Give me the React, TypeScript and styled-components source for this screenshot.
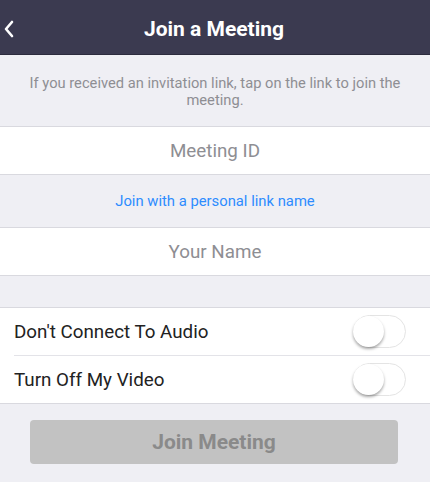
import React, { useState } from 'react';
import styled, { createGlobalStyle } from 'styled-components';

const GlobalStyle = createGlobalStyle`
  html, body {
    margin: 0;
    padding: 0;
    background: #efeff4;
    font-family: Roboto, "Noto Sans", "Liberation Sans", sans-serif;
  }
`;

const Screen = styled.div`
  display: flex;
  flex-direction: column;
  width: 430px;
  min-height: 482px;
  background: #efeff4;
`;

const Header = styled.header`
  align-items: center;
  background: #3b3a50;
  border-bottom: 1px solid #2c2b3d;
  display: flex;
  height: 54px;
  justify-content: center;
  position: relative;
`;

const BackButton = styled.button`
  align-items: center;
  background: none;
  border: none;
  display: flex;
  left: 2px;
  padding: 0;
  position: absolute;
  top: 20px;
`;

const Title = styled.h1`
  color: #ffffff;
  font-size: 21px;
  font-weight: 700;
  margin: 0 0 0 -2px;
  padding-top: 3px;
`;

const Info = styled.p`
  color: #8e8e93;
  font-size: 14.7px;
  line-height: 17px;
  margin: 0;
  padding: 20px 20px 17px;
  text-align: center;
  border-bottom: 1px solid #d9d9df;
`;

const InputRow = styled.input`
  background: #ffffff;
  border: none;
  border-bottom: 1px solid #d9d9df;
  box-sizing: border-box;
  color: #333333;
  font-family: inherit;
  font-size: 18.8px;
  height: 48px;
  padding: 0 16px;
  text-align: center;
  width: 100%;

  &::placeholder {
    color: #8e8e93;
  }

  &:focus {
    outline: none;
  }
`;

const LinkRow = styled.div`
  align-items: center;
  border-bottom: 1px solid #d9d9df;
  display: flex;
  height: 52px;
  justify-content: center;
`;

const Link = styled.a`
  color: #2d8cff;
  font-size: 14.8px;
  text-decoration: none;
`;

const Gap = styled.div`
  border-bottom: 1px solid #d9d9df;
  height: 31px;
`;

const OptionList = styled.div`
  background: #ffffff;
  border-bottom: 1px solid #d9d9df;
`;

const OptionRow = styled.div<{ divider?: boolean }>`
  align-items: center;
  display: flex;
  height: 47px;
  justify-content: space-between;
  margin-left: 14px;
  padding-right: 24px;
  border-bottom: ${props => (props.divider ? '1px solid #e3e3e8' : 'none')};
`;

const OptionLabel = styled.span`
  color: #222222;
  font-size: 18.8px;
`;

const Track = styled.button<{ on: boolean }>`
  background: ${props => (props.on ? '#2d8cff' : '#ffffff')};
  border: 1.5px solid ${props => (props.on ? '#2d8cff' : '#e4e4e4')};
  border-radius: 17px;
  box-sizing: border-box;
  height: 33px;
  padding: 0;
  position: relative;
  width: 53px;
`;

const Knob = styled.span<{ on: boolean }>`
  background: #ffffff;
  border-radius: 50%;
  box-shadow: 0 2px 3px rgba(0, 0, 0, 0.35);
  height: 31px;
  left: ${props => (props.on ? '20px' : '-1px')};
  position: absolute;
  top: -0.5px;
  width: 31px;
`;

const Footer = styled.div`
  padding: 16px 32px 0 30px;
`;

const JoinButton = styled.button`
  background: #c2c2c2;
  border: none;
  border-radius: 4px;
  color: #8a8a8a;
  font-family: inherit;
  font-size: 21px;
  font-weight: 700;
  height: 44px;
  width: 100%;
`;

const Toggle: React.FC<{ on: boolean; onChange: () => void }> = ({ on, onChange }) => (
  <Track on={on} onClick={onChange}>
    <Knob on={on} />
  </Track>
);

const App: React.FC = () => {
  const [noAudio, setNoAudio] = useState(false);
  const [noVideo, setNoVideo] = useState(false);

  return (
    <Screen>
      <GlobalStyle />
      <Header>
        <BackButton>
          <svg width="14" height="18" viewBox="0 0 14 18">
            <path d="M10 2 L4 9 L10 16" fill="none" stroke="#ffffff" strokeWidth="2.6" strokeLinecap="round" strokeLinejoin="round" />
          </svg>
        </BackButton>
        <Title>Join a Meeting</Title>
      </Header>
      <Info>If you received an invitation link, tap on the link to join the meeting.</Info>
      <InputRow placeholder="Meeting ID" />
      <LinkRow>
        <Link href="#">Join with a personal link name</Link>
      </LinkRow>
      <InputRow placeholder="Your Name" />
      <Gap />
      <OptionList>
        <OptionRow divider>
          <OptionLabel>Don't Connect To Audio</OptionLabel>
          <Toggle on={noAudio} onChange={() => setNoAudio(!noAudio)} />
        </OptionRow>
        <OptionRow>
          <OptionLabel>Turn Off My Video</OptionLabel>
          <Toggle on={noVideo} onChange={() => setNoVideo(!noVideo)} />
        </OptionRow>
      </OptionList>
      <Footer>
        <JoinButton>Join Meeting</JoinButton>
      </Footer>
    </Screen>
  );
};

export default App;
